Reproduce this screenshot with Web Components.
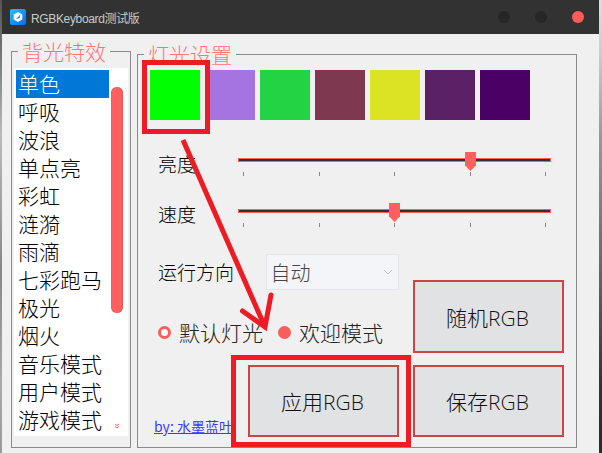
<!DOCTYPE html>
<html lang="zh">
<head>
<meta charset="utf-8">
<title>RGBKeyboard</title>
<style>
html,body{margin:0;padding:0}
body{width:602px;height:453px;overflow:hidden;position:relative;
 font-family:"Noto Sans CJK SC","Noto Sans",sans-serif;font-weight:300;
 background:
  linear-gradient(#555 0,#777 12%,#bbb 30%,#888 60%,#aaa 85%,#999 100%) left/2px 100% no-repeat,
  linear-gradient(#ddd 0,#ccc 12%,#999 30%,#777 50%,#666 60%,#333 85%,#2a2a2a 100%) right/3px 100% no-repeat,
  #333}
</style>
</head>
<body>
<rgb-window>
  <title-bar slot="title">RGBKeyboard测试版</title-bar>
  <group-box label="背光特效" style="margin-top:17px;width:120px">
    <effect-list>
      <effect-item selected>单色</effect-item>
      <effect-item>呼吸</effect-item>
      <effect-item>波浪</effect-item>
      <effect-item>单点亮</effect-item>
      <effect-item>彩虹</effect-item>
      <effect-item>涟漪</effect-item>
      <effect-item>雨滴</effect-item>
      <effect-item>七彩跑马</effect-item>
      <effect-item>极光</effect-item>
      <effect-item>烟火</effect-item>
      <effect-item>音乐模式</effect-item>
      <effect-item>用户模式</effect-item>
      <effect-item>游戏模式</effect-item>
    </effect-list>
  </group-box>
  <group-box label="灯光设置" style="margin-top:20px;width:440px">
    <light-panel></light-panel>
  </group-box>
</rgb-window>
<script>
function def(name, css, html, extra){
  class C extends HTMLElement{
    constructor(){
      super();
      const r=this.attachShadow({mode:'open'});
      r.innerHTML='<style>'+css+'</style>'+(typeof html==='function'?html(this):html);
    }
    connectedCallback(){ if(extra) extra(this); }
  }
  customElements.define(name,C);
}

def('rgb-window',`
 :host{display:block;position:absolute;left:2px;top:0;width:597px;height:453px;background:#f0f0f0;color:#000}
 .body{display:flex;gap:6px;padding:0 0 5px 9px;height:414px;align-items:stretch}
`,`<slot name="title"></slot><div class="body"><slot></slot></div><annotation-layer></annotation-layer>`);

def('title-bar',`
 :host{display:flex;align-items:center;height:34px;background:#323232;color:#c4cccc;font:400 12px "Liberation Sans","Noto Sans CJK SC",sans-serif;padding:0 0 0 8px;box-sizing:border-box}
 svg{width:16px;height:16px;margin:0 5px 0 0;flex:none}
 .t{flex:1;white-space:nowrap;letter-spacing:-.35px}
 .d{width:12px;height:12px;border-radius:50%;background:#262626;margin-right:25px}
 .d.c{background:#ff5a5a;margin-right:15px}
`,`<svg viewBox="0 0 16 16"><defs><linearGradient id="g" x1="0" y1="0" x2="1" y2="1"><stop offset="0" stop-color="#27c0ff"/><stop offset="1" stop-color="#0a68f0"/></linearGradient></defs><rect width="16" height="16" rx="2" fill="url(#g)"/><path d="M8 3 L12.3 5.5 V10.5 L8 13 L3.7 10.5 V5.5 Z" fill="#fff"/><path d="M5.8 10.2 L9 7 L10.4 5.6 L9.6 9 Z" fill="#1a86f5"/></svg><span class="t"><slot></slot></span><span class="d"></span><span class="d"></span><span class="d c"></span>`);

def('group-box',`
 :host{display:block;box-sizing:border-box;border:1px solid #8a8a8a;flex:none}
 .lg{margin:-14.5px 0 -13.5px 6px;width:fit-content;height:28px;line-height:27px;padding:0 4px;background:#f0f0f0;color:#ff7474;font-size:21px;white-space:nowrap}
`,h=>`<div class="lg">${h.getAttribute('label')}</div><slot></slot>`);

def('effect-list',`
 :host{display:flex;box-sizing:border-box;margin:16px 1px 0 2px;width:114px;height:368px;background:#fff;padding:2px 5px 2px 2px;position:relative}
 .items{width:93px;display:flex;flex-direction:column}
 .bar{width:12px;margin-left:2px;position:relative;display:flex;flex-direction:column}
 .thumb{margin-top:17px;height:226px;border-radius:6px;background:#ff5f5f;box-shadow:inset -1px 0 0 #e05555,inset 1px 0 0 #e86060}
 svg{width:6px;height:6px;margin:110px auto 0;display:block}
`,`<div class="items"><slot></slot></div><div class="bar"><div class="thumb"></div><svg viewBox="0 0 6 6"><path d="M1 1l2 1.5L5 1M1 3.5L3 5l2-1.5" fill="none" stroke="#ff5f5f" stroke-width="1"/></svg></div>`);

def('effect-item',`
 :host{display:block;height:28px;line-height:27px;font-size:21px;padding-left:2px;white-space:nowrap;color:#000}
 :host([selected]){background:#0078d7;color:#fff}
`,`<slot></slot>`);

def('color-swatch',`
 :host{display:block;width:50px;height:50px;flex:none;background:var(--c)}
`,``);

def('tick-slider',`
 :host{display:block;position:relative;width:313px;height:30px}
 .track{box-sizing:border-box;height:4px;margin-top:8px;background:#323232;border:1px solid #ff5f5f}
 .ticks{display:flex;justify-content:space-between;padding:0 5px;margin-top:10px}
 .ticks i{display:block;width:1px;height:4px;background:#888}
 .h{position:absolute;top:2px;width:11px;height:19px;background:#ff5f5f;clip-path:polygon(0 0,100% 0,100% 70%,50% 100%,0 70%)}
`,h=>`<div class="track"></div><div class="ticks"><i></i><i></i><i></i><i></i><i></i></div><div class="h" style="left:${h.getAttribute('pos')}px"></div>`);

def('flat-select',`
 :host{display:flex;align-items:center;box-sizing:border-box;width:134px;height:36px;background:#f4f5f8;border:1px solid #e4e5e8;color:#444;font-size:20px;padding:0 5px 0 4px}
 span{flex:1}
 svg{width:10px;height:6px}
`,`<span><slot></slot></span><svg viewBox="0 0 10 6"><path d="M1 1l4 4 4-4" fill="none" stroke="#c8ccd0" stroke-width="1"/></svg>`);

def('radio-opt',`
 :host{display:flex;align-items:center;font-size:21px;color:#222;white-space:nowrap}
 .r{box-sizing:border-box;width:13px;height:13px;border-radius:50%;margin-right:8px;background:#fff;border:3px solid #f95d5d;flex:none}
 :host([checked]) .r{background:#f95d5d}
`,`<span class="r"></span><slot></slot>`);

def('rgb-button',`
 :host{display:flex;align-items:center;justify-content:center;box-sizing:border-box;width:151px;height:var(--h,72px);background:#e1e2e4;border:2px solid #cc4545;font:300 21px "Open Sans","Noto Sans CJK SC",sans-serif;color:#111;flex:none;white-space:nowrap;padding-right:2px}
`,`<slot></slot>`);

def('light-panel',`
 :host{display:block;padding:15px 0 0 12px;font-size:19px}
 .sw{display:flex;gap:5px}
 .row{display:flex;align-items:flex-start}
 .row .l{width:88px;padding-left:8px;box-sizing:border-box;line-height:28px;height:30px;font-size:19px}
 .r1{margin-top:30px}
 .r2{margin-top:21px}
 .r2 .l{line-height:26px}
 .lower{display:grid;grid-template-columns:249px 151px;column-gap:14px;margin-top:23px}
 .left{display:flex;flex-direction:column}
 .dir{display:flex;align-items:center;height:36px}
 .dir .l{width:108px;padding-left:8px;font-size:19px;line-height:36px}
 .radios{display:flex;gap:15px;height:28px;margin-top:28px;padding-left:8px;align-items:center}
 .bot{display:flex;margin-top:19px;height:72px}
 .by{width:94px;padding-left:4px;align-self:flex-end;font-size:14px;font-weight:400;line-height:20px;margin-bottom:1px;color:#3a3aff;text-decoration:underline;white-space:nowrap}
 .right{display:flex;flex-direction:column;gap:12px;padding-top:26px}
`,`<div class="sw">
  <color-swatch style="--c:#00ff00"></color-swatch>
  <color-swatch style="--c:#a674e0"></color-swatch>
  <color-swatch style="--c:#22d443"></color-swatch>
  <color-swatch style="--c:#7e3850"></color-swatch>
  <color-swatch style="--c:#dbe323"></color-swatch>
  <color-swatch style="--c:#5a2166"></color-swatch>
  <color-swatch style="--c:#4b0065"></color-swatch>
 </div>
 <div class="row r1"><div class="l">亮度</div><tick-slider pos="227"></tick-slider></div>
 <div class="row r2"><div class="l">速度</div><tick-slider pos="151"></tick-slider></div>
 <div class="lower">
  <div class="left">
   <div class="dir"><div class="l">运行方向</div><flat-select>自动</flat-select></div>
   <div class="radios"><radio-opt>默认灯光</radio-opt><radio-opt checked>欢迎模式</radio-opt></div>
   <div class="bot"><div class="by">by: 水墨蓝叶</div><rgb-button>应用RGB</rgb-button></div>
  </div>
  <div class="right">
   <rgb-button style="--h:73px">随机RGB</rgb-button>
   <rgb-button>保存RGB</rgb-button>
  </div>
 </div>`);

def('annotation-layer',`
 :host{position:absolute;left:-2px;top:0;width:602px;height:453px;pointer-events:none;display:block}
 svg{display:block}
`,`<svg width="602" height="453" viewBox="0 0 602 453" fill="none" stroke="#ed1c24">
  <rect x="144.5" y="62.5" width="63" height="69" stroke-width="5"/>
  <rect x="233.5" y="357.5" width="175" height="87" stroke-width="5"/>
  <path d="M183 140 L265 327" stroke-width="5"/>
  <path d="M242.5 311 L265 327 L271 295" stroke-width="5" stroke-linecap="round"/>
 </svg>`);
</script>
</body>
</html>
